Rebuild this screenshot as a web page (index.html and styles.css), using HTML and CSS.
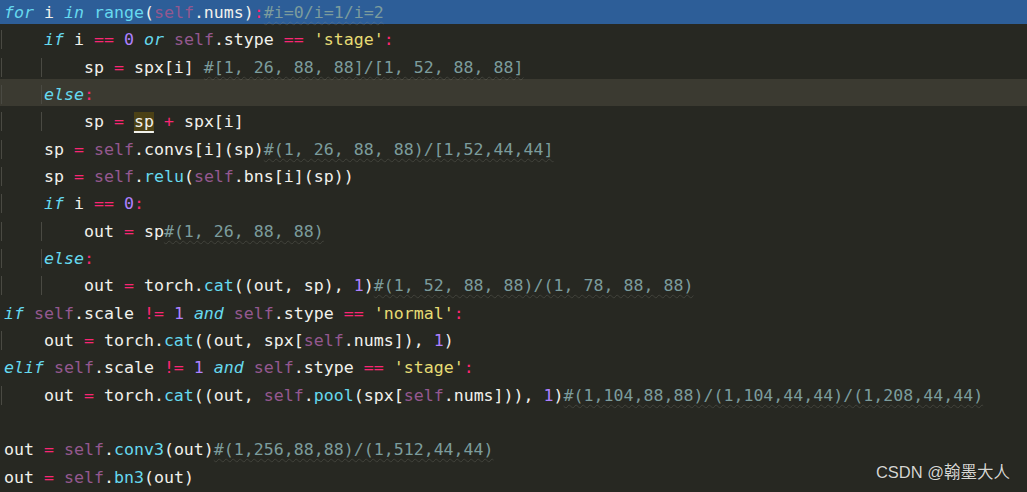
FILE: index.html
```html
<!DOCTYPE html>
<html>
<head>
<meta charset="utf-8">
<link rel="stylesheet" href="styles.css">
</head>
<body>
<div class="editor">
  <div class="code">
<div class="ln sel"><span class="k">for</span> i <span class="k">in</span> <span class="f">range</span>(<span class="s">self</span>.nums)<span class="o">:</span><span class="c">#i=0/i=1/i=2</span></div>
<div class="ln"><span class="g">    </span><span class="k">if</span> i <span class="o">==</span> <span class="n">0</span> <span class="k">or</span> <span class="s">self</span>.stype <span class="o">==</span> <span class="st">'stage'</span><span class="o">:</span></div>
<div class="ln"><span class="g">    </span><span class="g">    </span>sp <span class="o">=</span> spx[i] <span class="c">#[1, 26, 88, 88]/[1, 52, 88, 88]</span></div>
<div class="ln cur"><span class="g">    </span><span class="g"><span class="k">else</span><span class="o">:</span></span></div>
<div class="ln"><span class="g">    </span><span class="g">    </span>sp <span class="o">=</span> <span class="hl">sp</span> <span class="o">+</span> spx[i]</div>
<div class="ln"><span class="g">    </span>sp <span class="o">=</span> <span class="s">self</span>.convs[i](sp)<span class="c">#(1, 26, 88, 88)/[1,52,44,44]</span></div>
<div class="ln"><span class="g">    </span>sp <span class="o">=</span> <span class="s">self</span>.<span class="f">relu</span>(<span class="s">self</span>.bns[i](sp))</div>
<div class="ln"><span class="g">    </span><span class="k">if</span> i <span class="o">==</span> <span class="n">0</span><span class="o">:</span></div>
<div class="ln"><span class="g">    </span><span class="g">    </span>out <span class="o">=</span> sp<span class="c">#(1, 26, 88, 88)</span></div>
<div class="ln"><span class="g">    </span><span class="g"><span class="k">else</span><span class="o">:</span></span></div>
<div class="ln"><span class="g">    </span><span class="g">    </span>out <span class="o">=</span> torch.<span class="f">cat</span>((out, sp), <span class="n">1</span>)<span class="c">#(1, 52, 88, 88)/(1, 78, 88, 88)</span></div>
<div class="ln"><span class="k">if</span> <span class="s">self</span>.scale <span class="o">!=</span> <span class="n">1</span> <span class="k">and</span> <span class="s">self</span>.stype <span class="o">==</span> <span class="st">'normal'</span><span class="o">:</span></div>
<div class="ln"><span class="g">    </span>out <span class="o">=</span> torch.<span class="f">cat</span>((out, spx[<span class="s">self</span>.nums]), <span class="n">1</span>)</div>
<div class="ln"><span class="k">elif</span> <span class="s">self</span>.scale <span class="o">!=</span> <span class="n">1</span> <span class="k">and</span> <span class="s">self</span>.stype <span class="o">==</span> <span class="st">'stage'</span><span class="o">:</span></div>
<div class="ln"><span class="g">    </span>out <span class="o">=</span> torch.<span class="f">cat</span>((out, <span class="s">self</span>.<span class="f">pool</span>(spx[<span class="s">self</span>.nums])), <span class="n">1</span>)<span class="c">#(1,104,88,88)/(1,104,44,44)/(1,208,44,44)</span></div>
<div class="ln"> </div>
<div class="ln">out <span class="o">=</span> <span class="s">self</span>.<span class="f">conv3</span>(out)<span class="c">#(1,256,88,88)/(1,512,44,44)</span></div>
<div class="ln">out <span class="o">=</span> <span class="s">self</span>.<span class="f">bn3</span>(out)</div>
  </div>
  <div class="mark">CSDN @翰墨大人</div>
</div>
</body>
</html>
```
FILE: styles.css
```css
html, body {
  margin: 0;
  padding: 0;
  background: #272822;
  overflow: hidden;
}
.editor {
  position: relative;
  width: 1027px;
  height: 492px;
  overflow: hidden;
  background: #272822;
}
.code {
  margin-top: -3px;
  font-family: "DejaVu Sans Mono", "Liberation Mono", monospace;
  font-size: 16.6px;
  color: #f1f1ec;
}
.ln {
  box-sizing: border-box;
  height: 27.33px;
  padding-top: 5px;
  line-height: 22.33px;
  padding-left: 4px;
  white-space: pre;
}
.sel { background: #2d5e98; }
.cur { background: #3b3a31; }
.g {
  margin-left: -3px;
  padding-left: 2px;
  border-left: 1px solid #4a4a43;
}
.k { color: #66d9ef; font-style: italic; }
.f { color: #66d9ef; }
.s { color: #94588f; }
.o { color: #f92672; }
.n { color: #ae81ff; }
.st { color: #e6db74; }
.c {
  color: #7c9c9d;
  text-decoration: underline wavy rgba(140, 140, 130, 0.22);
  text-decoration-thickness: 1px;
  text-underline-offset: 3px;
}
.hl {
  background: #4b4116;
  text-decoration: underline #f1f1ec;
  text-decoration-thickness: 2px;
  text-underline-offset: 4px;
}
.mark {
  position: absolute;
  right: 17px;
  bottom: 9px;
  font-family: "Liberation Sans", "Noto Sans CJK SC", sans-serif;
  font-size: 16.5px;
  color: #d6d6d2;
  text-shadow: 0 0 1px rgba(0, 0, 0, 0.6);
}
```
